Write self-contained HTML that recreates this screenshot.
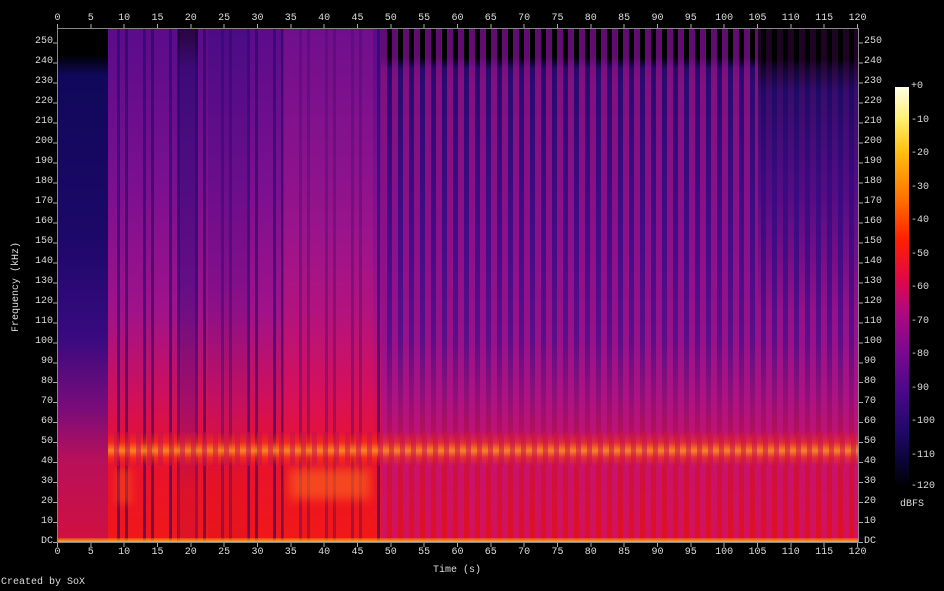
<!DOCTYPE html>
<html><head><meta charset="utf-8"><style>
*{margin:0;padding:0;box-sizing:border-box}
body{width:944px;height:591px;background:#000;position:relative;overflow:hidden;font-family:"Liberation Mono","DejaVu Sans Mono",monospace;font-size:10px;color:#ddd}
.a{position:absolute}
.l{position:absolute;line-height:10px;white-space:nowrap}
.xt{transform:translateX(-50%)}
.yl{transform:translate(-100%,-50%)}
.yr{transform:translateY(-50%)}
</style></head><body>
<div class="a" style="left:58px;top:29px;width:800px;height:513px;overflow:hidden;background:linear-gradient(#1a0550 0%,#2a0a6a 8%,#4a0c88 40%,#7a1088 62%,#b01070 76%,#d8103a 86%,#e81020 100%)">
  <div class="a" style="left:0;top:0;width:50px;height:513px;background:linear-gradient(#000 0%,#000 5%,#10085a 9%,#1c0868 40%,#380a80 60%,#7a0c7a 74%,#b8105a 84%,#d01040 100%)"></div>
  <div class="a" style="left:50px;top:0;width:273px;height:513px;background:linear-gradient(#5a0c8a 0%,#7a1090 30%,#a0128a 55%,#d0105a 72%,#e81030 82%,#f01818 100%)"></div>
  <div class="a" style="left:50px;top:0;width:273px;height:513px;background:repeating-linear-gradient(90deg,transparent 0 9px,rgba(40,8,110,.65) 9px 12px,transparent 12px 17px,rgba(30,6,90,.55) 17px 20px,transparent 20px 26px)"></div>
  <div class="a" style="left:120px;top:0;width:20px;height:513px;background:linear-gradient(#000 0%,#200868 8%,#3a0a80 50%,#8a0c70 76%,#d01030 90%);opacity:.55"></div>
  <div class="a" style="left:150px;top:0;width:40px;height:513px;background:linear-gradient(#3a0a80 0%,#6a0c88 50%,#c01060 76%,#e01020 90%);opacity:.45"></div>
  <div class="a" style="left:225px;top:0;width:90px;height:513px;background:linear-gradient(#8a1290 0%,#b01888 40%,#e0105a 70%,#f01818 90%);opacity:.45"></div>
  <div class="a" style="left:323px;top:0;width:477px;height:513px;background:linear-gradient(#1a0550 0%,#2a0a70 10%,#420c86 40%,#5a0e88 60%,#901078 72%,#c81048 82%,#e01020 100%)"></div>
  <div class="a" style="left:323px;top:0;width:477px;height:513px;background:repeating-linear-gradient(90deg,rgba(200,20,140,.55) 0 6px,transparent 6px 11px)"></div>
  <div class="a" style="left:323px;top:0;width:477px;height:40px;background:repeating-linear-gradient(90deg,rgba(120,16,140,.8) 0 6px,transparent 6px 11px),linear-gradient(#000,#000 70%,rgba(0,0,0,0))"></div>
  <div class="a" style="left:700px;top:0;width:100px;height:513px;background:linear-gradient(#000 0%,#000 6%,#180a60 12%,#3a0a80 30%,transparent 55%);opacity:.7"></div>
  <!-- orange band -->
  <div class="a" style="left:50px;top:403px;width:750px;height:34px;background:linear-gradient(rgba(255,60,0,0) 0%,rgba(255,70,0,.45) 30%,rgba(255,150,30,.85) 55%,rgba(255,80,0,.45) 75%,rgba(255,40,0,0) 100%)"></div>
  <div class="a" style="left:50px;top:403px;width:750px;height:34px;background:repeating-linear-gradient(90deg,transparent 0 6px,rgba(200,16,80,.55) 6px 11px)"></div>
  <!-- speech region (soft) -->
  <div class="a" style="left:232px;top:440px;width:80px;height:30px;background:rgba(255,130,30,.45);filter:blur(5px)"></div>
  <div class="a" style="left:58px;top:440px;width:16px;height:35px;background:rgba(255,110,20,.35);filter:blur(4px)"></div>
  <div class="a" style="left:0;top:509px;width:800px;height:4px;background:linear-gradient(rgba(255,150,0,.3),#ffb020)"></div>
</div>
<div class="a" style="left:57px;top:28px;width:802px;height:515px;border:1px solid #888"></div>
<div class="a" style="left:57px;top:24px;width:802px;height:4px;background:repeating-linear-gradient(90deg,#aaa 0 1px,transparent 1px 33.333px)"></div>
<div class="a" style="left:57px;top:543px;width:802px;height:4px;background:repeating-linear-gradient(90deg,#aaa 0 1px,transparent 1px 33.333px)"></div>
<div class="a" style="left:53px;top:42px;width:4px;height:501px;background:repeating-linear-gradient(0deg,#aaa 0 1px,transparent 1px 19.97px)"></div>
<div class="a" style="left:859px;top:42px;width:4px;height:501px;background:repeating-linear-gradient(0deg,#aaa 0 1px,transparent 1px 19.97px)"></div>
<div class="l xt" style="left:57.5px;top:14px">0</div><div class="l xt" style="left:90.8px;top:14px">5</div><div class="l xt" style="left:124.2px;top:14px">10</div><div class="l xt" style="left:157.5px;top:14px">15</div><div class="l xt" style="left:190.8px;top:14px">20</div><div class="l xt" style="left:224.2px;top:14px">25</div><div class="l xt" style="left:257.5px;top:14px">30</div><div class="l xt" style="left:290.8px;top:14px">35</div><div class="l xt" style="left:324.2px;top:14px">40</div><div class="l xt" style="left:357.5px;top:14px">45</div><div class="l xt" style="left:390.8px;top:14px">50</div><div class="l xt" style="left:424.2px;top:14px">55</div><div class="l xt" style="left:457.5px;top:14px">60</div><div class="l xt" style="left:490.8px;top:14px">65</div><div class="l xt" style="left:524.2px;top:14px">70</div><div class="l xt" style="left:557.5px;top:14px">75</div><div class="l xt" style="left:590.8px;top:14px">80</div><div class="l xt" style="left:624.2px;top:14px">85</div><div class="l xt" style="left:657.5px;top:14px">90</div><div class="l xt" style="left:690.8px;top:14px">95</div><div class="l xt" style="left:724.2px;top:14px">100</div><div class="l xt" style="left:757.5px;top:14px">105</div><div class="l xt" style="left:790.8px;top:14px">110</div><div class="l xt" style="left:824.2px;top:14px">115</div><div class="l xt" style="left:857.5px;top:14px">120</div>
<div class="l xt" style="left:57.5px;top:548px">0</div><div class="l xt" style="left:90.8px;top:548px">5</div><div class="l xt" style="left:124.2px;top:548px">10</div><div class="l xt" style="left:157.5px;top:548px">15</div><div class="l xt" style="left:190.8px;top:548px">20</div><div class="l xt" style="left:224.2px;top:548px">25</div><div class="l xt" style="left:257.5px;top:548px">30</div><div class="l xt" style="left:290.8px;top:548px">35</div><div class="l xt" style="left:324.2px;top:548px">40</div><div class="l xt" style="left:357.5px;top:548px">45</div><div class="l xt" style="left:390.8px;top:548px">50</div><div class="l xt" style="left:424.2px;top:548px">55</div><div class="l xt" style="left:457.5px;top:548px">60</div><div class="l xt" style="left:490.8px;top:548px">65</div><div class="l xt" style="left:524.2px;top:548px">70</div><div class="l xt" style="left:557.5px;top:548px">75</div><div class="l xt" style="left:590.8px;top:548px">80</div><div class="l xt" style="left:624.2px;top:548px">85</div><div class="l xt" style="left:657.5px;top:548px">90</div><div class="l xt" style="left:690.8px;top:548px">95</div><div class="l xt" style="left:724.2px;top:548px">100</div><div class="l xt" style="left:757.5px;top:548px">105</div><div class="l xt" style="left:790.8px;top:548px">110</div><div class="l xt" style="left:824.2px;top:548px">115</div><div class="l xt" style="left:857.5px;top:548px">120</div>
<div class="l yl" style="left:53px;top:542px">DC</div><div class="l yl" style="left:53px;top:522px">10</div><div class="l yl" style="left:53px;top:502px">20</div><div class="l yl" style="left:53px;top:482px">30</div><div class="l yl" style="left:53px;top:462px">40</div><div class="l yl" style="left:53px;top:442px">50</div><div class="l yl" style="left:53px;top:422px">60</div><div class="l yl" style="left:53px;top:402px">70</div><div class="l yl" style="left:53px;top:382px">80</div><div class="l yl" style="left:53px;top:362px">90</div><div class="l yl" style="left:53px;top:342px">100</div><div class="l yl" style="left:53px;top:322px">110</div><div class="l yl" style="left:53px;top:302px">120</div><div class="l yl" style="left:53px;top:282px">130</div><div class="l yl" style="left:53px;top:262px">140</div><div class="l yl" style="left:53px;top:242px">150</div><div class="l yl" style="left:53px;top:222px">160</div><div class="l yl" style="left:53px;top:202px">170</div><div class="l yl" style="left:53px;top:182px">180</div><div class="l yl" style="left:53px;top:162px">190</div><div class="l yl" style="left:53px;top:142px">200</div><div class="l yl" style="left:53px;top:122px">210</div><div class="l yl" style="left:53px;top:102px">220</div><div class="l yl" style="left:53px;top:82px">230</div><div class="l yl" style="left:53px;top:62px">240</div><div class="l yl" style="left:53px;top:42px">250</div>
<div class="l yr" style="left:864px;top:542px">DC</div><div class="l yr" style="left:864px;top:522px">10</div><div class="l yr" style="left:864px;top:502px">20</div><div class="l yr" style="left:864px;top:482px">30</div><div class="l yr" style="left:864px;top:462px">40</div><div class="l yr" style="left:864px;top:442px">50</div><div class="l yr" style="left:864px;top:422px">60</div><div class="l yr" style="left:864px;top:402px">70</div><div class="l yr" style="left:864px;top:382px">80</div><div class="l yr" style="left:864px;top:362px">90</div><div class="l yr" style="left:864px;top:342px">100</div><div class="l yr" style="left:864px;top:322px">110</div><div class="l yr" style="left:864px;top:302px">120</div><div class="l yr" style="left:864px;top:282px">130</div><div class="l yr" style="left:864px;top:262px">140</div><div class="l yr" style="left:864px;top:242px">150</div><div class="l yr" style="left:864px;top:222px">160</div><div class="l yr" style="left:864px;top:202px">170</div><div class="l yr" style="left:864px;top:182px">180</div><div class="l yr" style="left:864px;top:162px">190</div><div class="l yr" style="left:864px;top:142px">200</div><div class="l yr" style="left:864px;top:122px">210</div><div class="l yr" style="left:864px;top:102px">220</div><div class="l yr" style="left:864px;top:82px">230</div><div class="l yr" style="left:864px;top:62px">240</div><div class="l yr" style="left:864px;top:42px">250</div>
<div class="l" style="left:433px;top:566px">Time (s)</div>
<div class="l" style="left:17px;top:287px;transform:translate(-50%,-50%) rotate(-90deg)">Frequency (kHz)</div>
<div class="l" style="left:1px;top:578px">Created by SoX</div>
<div class="a" style="left:895px;top:87px;width:14px;height:401px;background:linear-gradient(#ffffe8 0%,#fff070 8%,#ffc010 16%,#ff7000 28%,#ff2000 38%,#e00848 48%,#b00880 56%,#7a0890 66%,#4a0888 76%,#200868 86%,#080430 94%,#000 100%)"></div>
<div class="l yr" style="left:911px;top:87px">+0</div><div class="l yr" style="left:911px;top:120.5px">-10</div><div class="l yr" style="left:911px;top:154px">-20</div><div class="l yr" style="left:911px;top:187.5px">-30</div><div class="l yr" style="left:911px;top:221px">-40</div><div class="l yr" style="left:911px;top:254.5px">-50</div><div class="l yr" style="left:911px;top:288px">-60</div><div class="l yr" style="left:911px;top:321.5px">-70</div><div class="l yr" style="left:911px;top:355px">-80</div><div class="l yr" style="left:911px;top:388.5px">-90</div><div class="l yr" style="left:911px;top:422px">-100</div><div class="l yr" style="left:911px;top:455.5px">-110</div><div class="l yr" style="left:911px;top:487px">-120</div>
<div class="l" style="left:900px;top:500px">dBFS</div>
</body></html>
